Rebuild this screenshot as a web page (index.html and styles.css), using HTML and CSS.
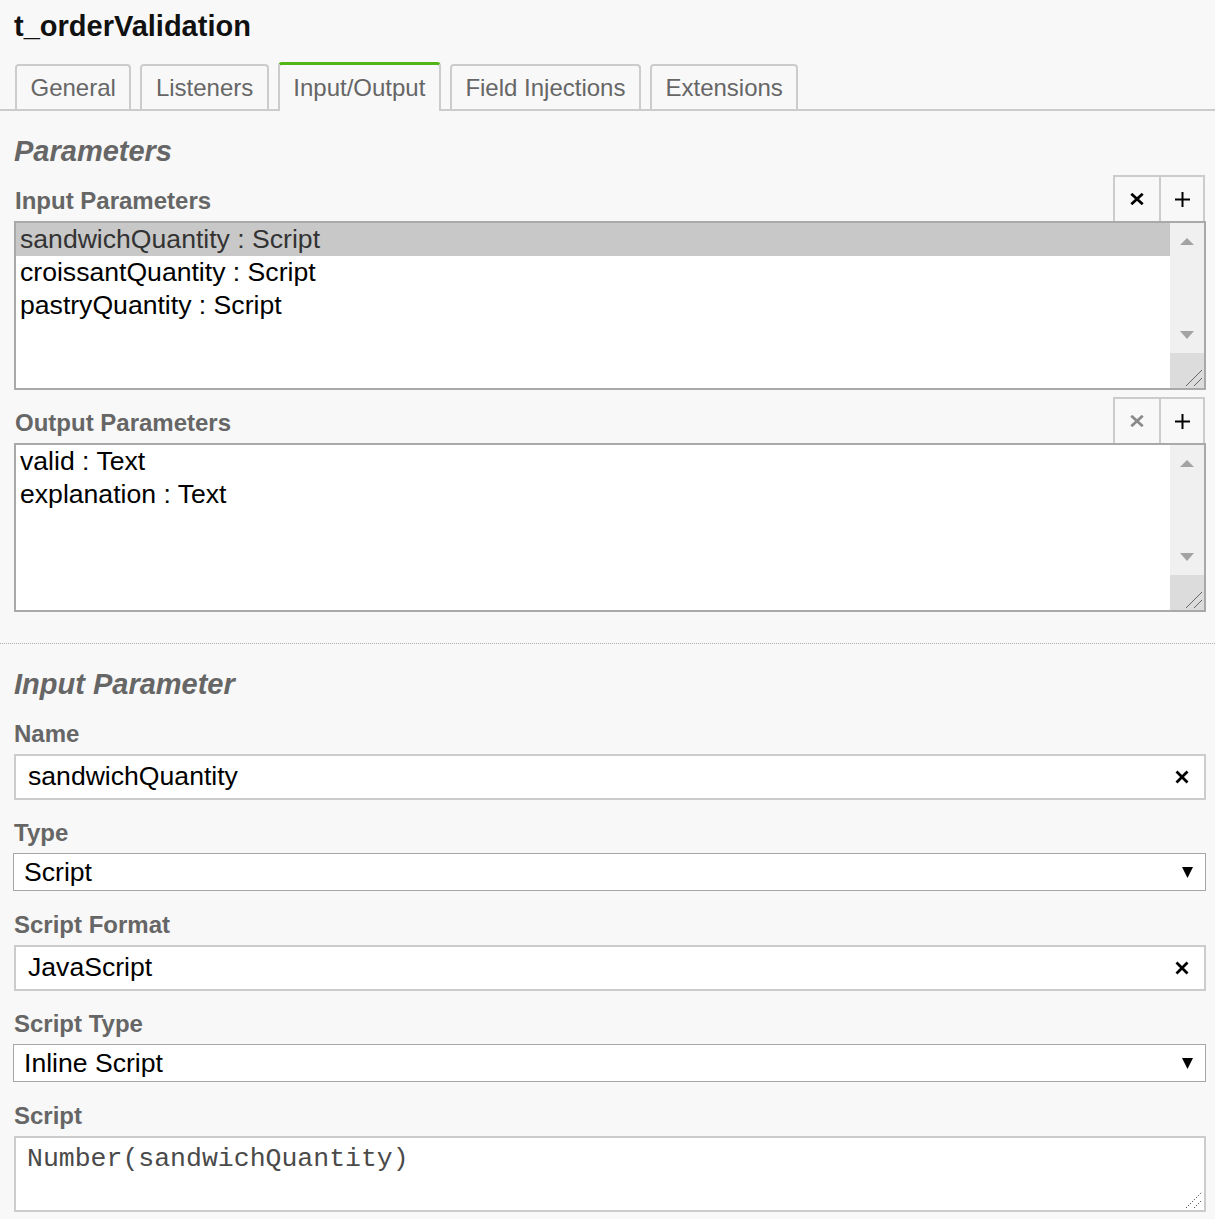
FILE: index.html
```html
<!DOCTYPE html>
<html>
<head>
<meta charset="utf-8">
<title>t_orderValidation</title>
<link rel="stylesheet" href="styles.css">
</head>
<body>
<div class="title">t_orderValidation</div>
<div class="tabs">
  <div class="tab">General</div>
  <div class="tab">Listeners</div>
  <div class="tab active">Input/Output</div>
  <div class="tab">Field Injections</div>
  <div class="tab">Extensions</div>
</div>

<section class="params">
  <h2 class="heading">Parameters</h2>

  <div class="list-head">
    <div class="list-label">Input Parameters</div>
    <div class="btns">
      <div class="btn"><svg width="14" height="12" viewBox="0 0 14 12"><path d="M1.3 0.8L12.7 11.2M12.7 0.8L1.3 11.2" stroke="#000" stroke-width="2.8" fill="none"/></svg></div>
      <div class="btn"><svg width="17" height="17" viewBox="0 0 17 17"><path d="M8.5 1V16M1 8.5H16" stroke="#000" stroke-width="2" fill="none"/></svg></div>
    </div>
  </div>
  <div class="listbox">
    <div class="rows">
      <div class="row sel">sandwichQuantity : Script</div>
      <div class="row">croissantQuantity : Script</div>
      <div class="row">pastryQuantity : Script</div>
    </div>
    <div class="sbar">
      <div class="sb-btn"><span class="tri-up"></span></div>
      <div class="sb-track"></div>
      <div class="sb-btn"><span class="tri-down"></span></div>
      <div class="corner"><svg width="18" height="17" viewBox="0 0 18 17"><path d="M1 16L17 0M9 16L17 8" stroke="#666" stroke-width="1" fill="none"/></svg></div>
    </div>
  </div>

  <div class="list-head out">
    <div class="list-label">Output Parameters</div>
    <div class="btns">
      <div class="btn"><svg width="14" height="12" viewBox="0 0 14 12"><path d="M1.3 0.8L12.7 11.2M12.7 0.8L1.3 11.2" stroke="#8a8a8a" stroke-width="2.8" fill="none"/></svg></div>
      <div class="btn"><svg width="17" height="17" viewBox="0 0 17 17"><path d="M8.5 1V16M1 8.5H16" stroke="#000" stroke-width="2" fill="none"/></svg></div>
    </div>
  </div>
  <div class="listbox">
    <div class="rows">
      <div class="row">valid : Text</div>
      <div class="row">explanation : Text</div>
    </div>
    <div class="sbar">
      <div class="sb-btn"><span class="tri-up"></span></div>
      <div class="sb-track"></div>
      <div class="sb-btn"><span class="tri-down"></span></div>
      <div class="corner"><svg width="18" height="17" viewBox="0 0 18 17"><path d="M1 16L17 0M9 16L17 8" stroke="#666" stroke-width="1" fill="none"/></svg></div>
    </div>
  </div>
</section>

<section class="detail">
  <h2 class="heading">Input Parameter</h2>

  <div class="field">
    <div class="label">Name</div>
    <div class="input"><span>sandwichQuantity</span><svg width="14" height="14" viewBox="0 0 14 14"><path d="M1.5 1.5L12.5 12.5M12.5 1.5L1.5 12.5" stroke="#000" stroke-width="2.8" fill="none"/></svg></div>
  </div>

  <div class="field">
    <div class="label">Type</div>
    <div class="select"><span>Script</span><svg width="11" height="11" viewBox="0 0 11 11"><path d="M0 0H11L5.5 11Z" fill="#000"/></svg></div>
  </div>

  <div class="field">
    <div class="label">Script Format</div>
    <div class="input"><span>JavaScript</span><svg width="14" height="14" viewBox="0 0 14 14"><path d="M1.5 1.5L12.5 12.5M12.5 1.5L1.5 12.5" stroke="#000" stroke-width="2.8" fill="none"/></svg></div>
  </div>

  <div class="field">
    <div class="label">Script Type</div>
    <div class="select"><span>Inline Script</span><svg width="11" height="11" viewBox="0 0 11 11"><path d="M0 0H11L5.5 11Z" fill="#000"/></svg></div>
  </div>

  <div class="field">
    <div class="label">Script</div>
    <div class="textarea">Number(sandwichQuantity)<svg class="grip" width="18" height="18" viewBox="0 0 18 18"><path d="M1 17L17 1M9 17L17 9" stroke="#555" stroke-width="1" stroke-dasharray="1.4 1.4" fill="none"/></svg></div>
  </div>
</section>
</body>
</html>
```

FILE: styles.css
```css
* { box-sizing: border-box; }

body {
  margin: 0;
  background: #f8f8f8;
  font-family: "Liberation Sans", Arial, sans-serif;
  color: #000;
}

.title {
  font-size: 29px;
  font-weight: bold;
  line-height: 32px;
  padding: 10px 0 0 14px;
  color: #111;
}

.tabs {
  display: flex;
  align-items: flex-end;
  gap: 9px;
  margin-top: 20px;
  padding-left: 15px;
  border-bottom: 2px solid #cccccc;
}

.tab {
  height: 45px;
  padding: 0 13.5px;
  border: 2px solid #cccccc;
  border-bottom: 0;
  border-radius: 4px 4px 0 0;
  font-size: 24px;
  color: #666;
  display: flex;
  align-items: center;
  background: #f8f8f8;
}

.tab.active {
  height: 49px;
  margin-bottom: -2px;
  border-top: 3px solid #52b415;
}

.params {
  padding: 24px 9px 31px 14px;
  border-bottom: 1px dotted #b0b0b0;
}

.heading {
  margin: 0;
  font-size: 29px;
  font-style: italic;
  font-weight: bold;
  line-height: 32px;
  color: #666;
}

.list-head {
  display: flex;
  align-items: flex-end;
  justify-content: space-between;
  margin-top: 8px;
}

.list-head.out { margin-top: 7px; }

.list-label {
  font-size: 24px;
  font-weight: bold;
  line-height: 28px;
  color: #666;
  padding-bottom: 6px;
  padding-left: 1px;
}

.btns {
  display: flex;
  border: 2px solid #cccccc;
  border-bottom: 0;
  margin-right: 1px;
}

.btn {
  width: 44px;
  height: 44px;
  display: flex;
  align-items: center;
  justify-content: center;
}

.btn + .btn { border-left: 2px solid #cccccc; }

.listbox {
  display: flex;
  height: 169px;
  border: 2px solid #a9a9a9;
  background: #fff;
}

.rows { flex: 1; }

.row {
  font-size: 26.6px;
  line-height: 33px;
  padding-left: 4px;
  white-space: nowrap;
}

.row.sel {
  background: #c8c8c8;
  color: #333;
}

.sbar {
  width: 34px;
  background: #f0f0f0;
  display: flex;
  flex-direction: column;
}

.sb-btn {
  height: 36px;
  display: flex;
  align-items: center;
  justify-content: center;
}

.sb-track { flex: 1; }

.tri-up {
  width: 0;
  height: 0;
  border-left: 7.5px solid transparent;
  border-right: 7.5px solid transparent;
  border-bottom: 7px solid #a3a3a3;
}

.tri-down {
  width: 0;
  height: 0;
  border-left: 7.5px solid transparent;
  border-right: 7.5px solid transparent;
  border-top: 8px solid #a3a3a3;
}

.corner {
  height: 35px;
  background: #dcdcdc;
  display: flex;
  align-items: flex-end;
  justify-content: flex-end;
  padding: 0 1px 1px 0;
}

.detail {
  padding: 24px 9px 0 14px;
}

.field { margin-top: 19.5px; }

.label {
  font-size: 24px;
  font-weight: bold;
  line-height: 28px;
  color: #666;
  margin-bottom: 6px;
}

.input {
  height: 46px;
  border: 2px solid #cccccc;
  background: #fff;
  display: flex;
  align-items: center;
  justify-content: space-between;
  padding: 0 15px 0 12px;
  font-size: 26.6px;
}

.select {
  height: 38px;
  margin-left: -1px;
  border: 1px solid #a6a6a6;
  background: #fff;
  display: flex;
  align-items: center;
  justify-content: space-between;
  padding: 0 12px 0 10px;
  font-size: 26.6px;
}

.textarea {
  position: relative;
  height: 76px;
  border: 2px solid #cccccc;
  background: #fff;
  padding: 6px 11px;
  font-family: "Liberation Mono", "Courier New", monospace;
  font-size: 26.5px;
  color: #4a4a4a;
}

.grip {
  position: absolute;
  right: 1px;
  bottom: 1px;
}
```
